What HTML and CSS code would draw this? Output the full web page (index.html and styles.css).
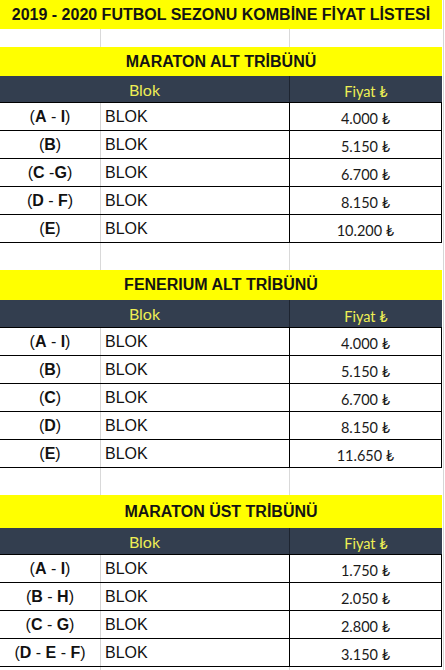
FILE: index.html
```html
<!DOCTYPE html>
<html lang="tr">
<head>
<meta charset="utf-8">
<title>2019 - 2020 Futbol Sezonu Kombine Fiyat Listesi</title>
<link rel="stylesheet" href="styles.css">
</head>
<body>
<div class="sheet">
  <div class="title-band">2019 - 2020 FUTBOL SEZONU KOMBİNE FİYAT LİSTESİ</div>
  <div class="gap gap-first"><span></span><span></span><span></span></div>

  <div class="sec-title sec-1">MARATON ALT TRİBÜNÜ</div>
  <div class="head head-1"><div class="h-blok">Blok</div><div class="h-fiyat">Fiyat ₺</div></div>
  <div class="rows">
    <div class="row"><div class="lbl">(<b>A</b> - <b>I</b>)</div><div class="blok">BLOK</div><div class="price">4.000 ₺</div></div>
    <div class="row"><div class="lbl">(<b>B</b>)</div><div class="blok">BLOK</div><div class="price">5.150 ₺</div></div>
    <div class="row"><div class="lbl">(<b>C</b> -<b>G</b>)</div><div class="blok">BLOK</div><div class="price">6.700 ₺</div></div>
    <div class="row"><div class="lbl">(<b>D</b> - <b>F</b>)</div><div class="blok">BLOK</div><div class="price">8.150 ₺</div></div>
    <div class="row"><div class="lbl">(<b>E</b>)</div><div class="blok">BLOK</div><div class="price">10.200 ₺</div></div>
  </div>
  <div class="gap gap-mid"><span></span><span></span><span></span></div>

  <div class="sec-title sec-2">FENERIUM ALT TRİBÜNÜ</div>
  <div class="head head-2"><div class="h-blok">Blok</div><div class="h-fiyat">Fiyat ₺</div></div>
  <div class="rows">
    <div class="row"><div class="lbl">(<b>A</b> - <b>I</b>)</div><div class="blok">BLOK</div><div class="price">4.000 ₺</div></div>
    <div class="row"><div class="lbl">(<b>B</b>)</div><div class="blok">BLOK</div><div class="price">5.150 ₺</div></div>
    <div class="row"><div class="lbl">(<b>C</b>)</div><div class="blok">BLOK</div><div class="price">6.700 ₺</div></div>
    <div class="row"><div class="lbl">(<b>D</b>)</div><div class="blok">BLOK</div><div class="price">8.150 ₺</div></div>
    <div class="row"><div class="lbl">(<b>E</b>)</div><div class="blok">BLOK</div><div class="price">11.650 ₺</div></div>
  </div>
  <div class="gap gap-mid"><span></span><span></span><span></span></div>

  <div class="sec-title sec-3">MARATON ÜST TRİBÜNÜ</div>
  <div class="head head-1"><div class="h-blok">Blok</div><div class="h-fiyat">Fiyat ₺</div></div>
  <div class="rows">
    <div class="row"><div class="lbl">(<b>A</b> - <b>I</b>)</div><div class="blok">BLOK</div><div class="price">1.750 ₺</div></div>
    <div class="row"><div class="lbl">(<b>B</b> - <b>H</b>)</div><div class="blok">BLOK</div><div class="price">2.050 ₺</div></div>
    <div class="row"><div class="lbl">(<b>C</b> - <b>G</b>)</div><div class="blok">BLOK</div><div class="price">2.800 ₺</div></div>
    <div class="row"><div class="lbl">(<b>D</b> - <b>E</b> - <b>F</b>)</div><div class="blok">BLOK</div><div class="price">3.150 ₺</div></div>
  </div>
  <div class="gap gap-end"><span></span><span></span><span></span></div>
</div>
</body>
</html>
```

FILE: styles.css
```css
html, body {
  margin: 0;
  padding: 0;
  background: #ffffff;
}

body {
  font-family: "Liberation Sans", Arial, sans-serif;
  color: #111111;
}

.sheet {
  width: 443px;
  height: 670px;
  overflow: hidden;
  border-right: 1px solid #d6d6d6;
  box-sizing: content-box;
}

.sheet > div {
  margin-right: 1px;
}

.title-band {
  height: 29px;
  background: #ffff00;
  display: flex;
  align-items: center;
  justify-content: center;
  font-weight: bold;
  font-size: 16px;
  color: #141414;
  white-space: nowrap;
}

.gap {
  display: grid;
  grid-template-columns: 101px 189px 1fr;
}

.gap span:nth-child(1),
.gap span:nth-child(2) {
  border-right: 1px solid #d9d9d9;
}

.gap-first { height: 18px; }
.gap-mid { height: 27px; }
.gap-end { height: 10px; }

.sec-title {
  background: #ffff00;
  display: flex;
  align-items: center;
  justify-content: center;
  font-weight: bold;
  font-size: 16px;
  color: #141414;
  white-space: nowrap;
}

.sec-1 { height: 29px; padding-top: 1px; box-sizing: border-box; }
.sec-2 { height: 30px; }
.sec-3 { height: 33px; }

.head {
  display: grid;
  grid-template-columns: 290px 1fr;
  background: #333e4f;
  font-family: Lato, "Liberation Sans", sans-serif;
  color: #eeee55;
}

.head-1 { height: 26px; }
.head-2 { height: 27px; }

.h-blok {
  border-right: 1px solid #1d2430;
  display: flex;
  align-items: center;
  justify-content: center;
  font-size: 16px;
}

.h-fiyat {
  display: flex;
  align-items: center;
  justify-content: center;
  font-size: 14.5px;
  padding-top: 5px;
  box-sizing: border-box;
}

.rows {
  border-top: 1px solid #000;
}

.row {
  display: grid;
  grid-template-columns: 101px 189px 1fr;
  height: 28px;
  box-sizing: border-box;
  border-bottom: 1px solid #000;
  border-right: 1px solid #000;
}

.lbl {
  border-right: 1px solid #d4d4d4;
  display: flex;
  align-items: center;
  justify-content: center;
  font-size: 16px;
  white-space: pre;
  color: #111;
}

.lbl b {
  font-weight: bold;
}

.blok {
  border-right: 1px solid #000;
  display: flex;
  align-items: center;
  padding-left: 4px;
  font-size: 16px;
  color: #111;
}

.price {
  display: flex;
  align-items: center;
  justify-content: center;
  padding-top: 4px;
  box-sizing: border-box;
  font-family: Lato, "Liberation Sans", sans-serif;
  font-size: 14.5px;
  color: #1a1a1a;
}
```
